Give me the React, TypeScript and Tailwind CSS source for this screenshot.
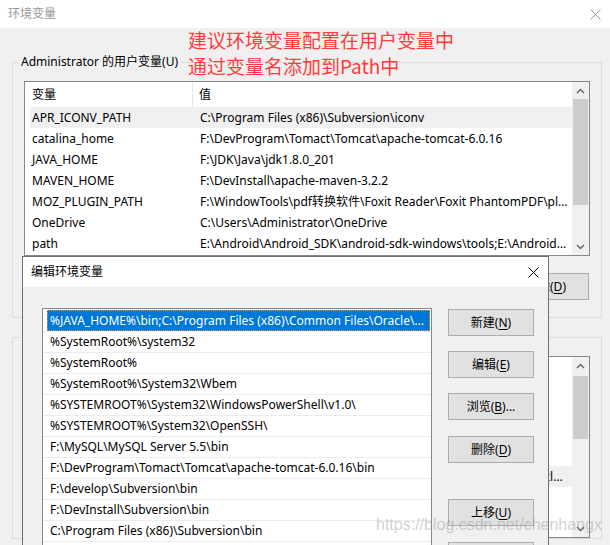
import React from "react";

const userVars = [
  ["APR_ICONV_PATH", "C:\\Program Files (x86)\\Subversion\\iconv"],
  ["catalina_home", "F:\\DevProgram\\Tomact\\Tomcat\\apache-tomcat-6.0.16"],
  ["JAVA_HOME", "F:\\JDK\\Java\\jdk1.8.0_201"],
  ["MAVEN_HOME", "F:\\DevInstall\\apache-maven-3.2.2"],
  ["MOZ_PLUGIN_PATH", "F:\\WindowTools\\pdf转换软件\\Foxit Reader\\Foxit PhantomPDF\\plugins\\"],
  ["OneDrive", "C:\\Users\\Administrator\\OneDrive"],
  ["path", "E:\\Android\\Android_SDK\\android-sdk-windows\\tools;E:\\Android\\Android_SDK\\platform-tools"],
];

const sysVars = [
  ["ComSpec", "C:\\WINDOWS\\system32\\cmd.exe"],
  ["DriverData", "C:\\Windows\\System32\\Drivers\\DriverData"],
  ["NUMBER_OF_PROCESSORS", "4"],
  ["OS", "Windows_NT"],
  ["Path", "%JAVA_HOME%\\bin;C:\\Program Files (x86)\\Common Files\\Oracle\\Java\\javapath;%SystemRoot%\\system32;%SystemRoot%;D:\\Tools"],
  ["PATHEXT", ".COM;.EXE;.BAT;.CMD;.VBS;.VBE;.JS;.JSE;.WSF;.WSH"],
  ["PROCESSOR_ARCHITECTURE", "AMD64"],
  ["PROCESSOR_LEVEL", "6"],
];

const paths = [
  "%JAVA_HOME%\\bin;C:\\Program Files (x86)\\Common Files\\Oracle\\Java\\javapath",
  "%SystemRoot%\\system32",
  "%SystemRoot%",
  "%SystemRoot%\\System32\\Wbem",
  "%SYSTEMROOT%\\System32\\WindowsPowerShell\\v1.0\\",
  "%SYSTEMROOT%\\System32\\OpenSSH\\",
  "F:\\MySQL\\MySQL Server 5.5\\bin",
  "F:\\DevProgram\\Tomact\\Tomcat\\apache-tomcat-6.0.16\\bin",
  "F:\\develop\\Subversion\\bin",
  "F:\\DevInstall\\Subversion\\bin",
  "C:\\Program Files (x86)\\Subversion\\bin",
  "F:\\Git\\cmd",
  "F:\\nodejs\\",
];

function CloseIcon({ color }: { color: string }) {
  return (
    <svg width="11" height="11" viewBox="0 0 11 11">
      <path d="M0.5 0.5 L10.5 10.5 M10.5 0.5 L0.5 10.5" stroke={color} strokeWidth="1" fill="none" />
    </svg>
  );
}

function Chevron({ down }: { down?: boolean }) {
  return (
    <svg width="9" height="6" viewBox="0 0 9 6">
      <path
        d={down ? "M1 1 L4.5 4.5 L8 1" : "M1 5 L4.5 1.5 L8 5"}
        stroke="#606060"
        strokeWidth="1.4"
        fill="none"
      />
    </svg>
  );
}

function Scrollbar({ thumbTop, thumbHeight }: { thumbTop: number; thumbHeight: number }) {
  return (
    <div className="w-[17px] shrink-0 bg-[#f0f0f0] flex flex-col">
      <div className="h-[17px] flex items-center justify-center">
        <Chevron />
      </div>
      <div className="flex-1 flex flex-col">
        <div style={{ height: thumbTop }} />
        <div className="mx-[1px] bg-[#cdcdcd]" style={{ height: thumbHeight }} />
        <div className="flex-1" />
      </div>
      <div className="h-[17px] flex items-center justify-center">
        <Chevron down />
      </div>
    </div>
  );
}

function VarList({
  rows,
  grayRow,
  height,
  thumbTop,
  thumbHeight,
}: {
  rows: string[][];
  grayRow: number;
  height: number;
  thumbTop: number;
  thumbHeight: number;
}) {
  return (
    <div className="flex border border-[#828790] bg-white" style={{ height }}>
      <div className="flex-1 min-w-0 flex flex-col overflow-hidden">
        <div className="h-[25px] shrink-0 flex items-center">
          <div className="w-[168px] pl-[7px] h-full flex items-center border-r border-[#e5e5e5]">变量</div>
          <div className="pl-[6px]">值</div>
        </div>
        {rows.map(([k, v], i) => (
          <div
            key={i}
            className={`h-[21px] shrink-0 flex items-center ml-[5px] ${i === grayRow ? "bg-[#f0f0f0]" : ""}`}
          >
            <div className="w-[163px] shrink-0 pl-[2px] truncate">{k}</div>
            <div className="flex-1 min-w-0 pl-[7px] pr-[4px] truncate">{v}</div>
          </div>
        ))}
      </div>
      <Scrollbar thumbTop={thumbTop} thumbHeight={thumbHeight} />
    </div>
  );
}

function Btn({ label, mn, tail }: { label: string; mn: string; tail?: string }) {
  return (
    <div className="w-[86px] h-[27px] shrink-0 border border-[#adadad] bg-[#e1e1e1] flex items-center justify-center">
      <span>
        {label}(<span className="underline underline-offset-2">{mn}</span>){tail}
      </span>
    </div>
  );
}

export default function App() {
  return (
    <div className="relative w-[610px] h-[545px] overflow-hidden bg-[#f0f0f0] text-[12px] leading-[16px] text-black font-['Segoe_UI','Noto_Sans','Noto_Sans_CJK_SC',sans-serif]">
      {/* background window: 环境变量 */}
      <div className="flex flex-col h-full">
        <div className="h-[28px] shrink-0 bg-white flex items-center justify-between pl-[8px] pr-[9px] text-[#999]">
          <span>环境变量</span>
          <CloseIcon color="#999" />
        </div>

        <div className="flex-1 flex flex-col">
          <fieldset className="min-w-0 ml-[12px] mr-[8px] mt-[26px] border border-[#dcdcdc] p-0">
            <legend className="ml-[6px] px-[2px] leading-[16px]">Administrator 的用户变量(U)</legend>
            <div className="px-[11px] pt-[11px] pb-[17px]">
              <VarList rows={userVars} grayRow={0} height={175} thumbTop={0} thumbHeight={106} />
              <div className="flex justify-end gap-[8px] mt-[17px] mr-[1px]">
                <div className="w-[86px] h-[27px] border border-[#adadad] bg-[#e1e1e1]" />
                <div className="w-[86px] h-[27px] border border-[#adadad] bg-[#e1e1e1]" />
                <div className="w-[86px] h-[27px] border border-[#adadad] bg-[#e1e1e1] flex items-center justify-center">
                  <span>删除(<span className="underline underline-offset-2">D</span>)</span>
                </div>
              </div>
            </div>
          </fieldset>

          <fieldset className="min-w-0 ml-[12px] mr-[8px] mt-[11px] border border-[#dcdcdc] p-0">
            <legend className="ml-[6px] px-[2px] leading-[16px]">系统变量(S)</legend>
            <div className="px-[11px] pt-[11px]">
              <VarList rows={sysVars} grayRow={4} height={182} thumbTop={2} thumbHeight={63} />
            </div>
          </fieldset>
        </div>
      </div>

      {/* red annotation */}
      <div className="absolute left-[188px] top-[27px] text-[19px] leading-[26px] text-[#ff3b3b] font-['Microsoft_YaHei','Noto_Sans_CJK_SC',sans-serif]">
        <div>建议环境变量配置在用户变量中</div>
        <div>通过变量名添加到Path中</div>
      </div>

      {/* dialog: 编辑环境变量 */}
      <div className="absolute left-[22px] top-[256px] w-[527px] h-[340px] border border-[#707070] bg-[#f0f0f0] flex flex-col">
        <div className="h-[30px] shrink-0 bg-white flex items-center justify-between pl-[8px] pr-[9px]">
          <span>编辑环境变量</span>
          <CloseIcon color="#000" />
        </div>
        <div className="flex pl-[19px] pt-[21px]">
          <div className="w-[390px] h-[300px] border border-[#828790] bg-white pt-[1px] flex flex-col overflow-hidden">
            {paths.map((p, i) =>
              i === 0 ? (
                <div key={i} className="h-[21px] shrink-0 flex items-center ml-[4px] mr-[1px] bg-[#0078d7] text-white border border-dotted border-[#e0a040] pl-[2px] pr-[2px]">
                  <span className="truncate">{p}</span>
                </div>
              ) : (
                <div key={i} className="h-[21px] shrink-0 flex items-center border-t border-[#ececec] pl-[7px] pr-[3px]">
                  <span className="truncate">{p}</span>
                </div>
              )
            )}
          </div>
          <div className="flex flex-col ml-[16px] pt-[1px]">
            <Btn label="新建" mn="N" />
            <div className="mt-[15px]"><Btn label="编辑" mn="E" /></div>
            <div className="mt-[15px]"><Btn label="浏览" mn="B" tail="..." /></div>
            <div className="mt-[16px]"><Btn label="删除" mn="D" /></div>
            <div className="mt-[36px]"><Btn label="上移" mn="U" /></div>
            <div className="mt-[16px]"><Btn label="下移" mn="O" /></div>
          </div>
        </div>
      </div>

      {/* watermark */}
      <div className="absolute left-[376px] top-[515px] text-[16px] leading-[20px] text-[rgba(150,150,150,0.45)] font-['Liberation_Sans',sans-serif] pointer-events-none">
        https://blog.csdn.net/chenhangx
      </div>
    </div>
  );
}
